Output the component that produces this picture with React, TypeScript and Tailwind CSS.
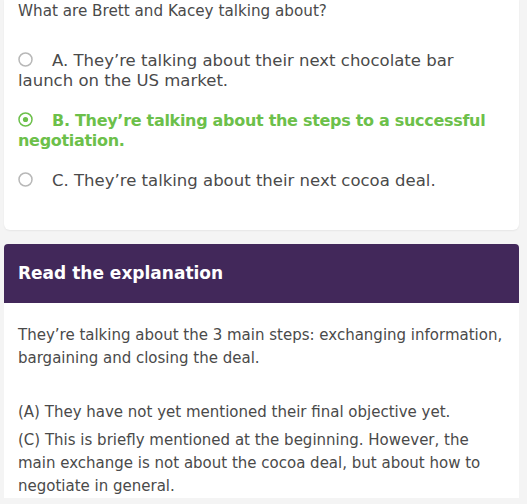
import React from 'react';

const options = [
  { id: 'A', text: 'They’re talking about their next chocolate bar launch on the US market.' },
  { id: 'B', text: 'They’re talking about the steps to a successful negotiation.' },
  { id: 'C', text: 'They’re talking about their next cocoa deal.' },
];

const Radio = ({ selected }: { selected: boolean }) => (
  <svg width="15" height="15" viewBox="0 0 15 15" className="inline-block align-[-1px] mr-[19px]">
    <circle cx="7.5" cy="7.5" r="6.5" fill="none" stroke={selected ? '#6cc04a' : '#b8b8b8'} strokeWidth="1.5" />
    {selected && <circle cx="7.5" cy="7.5" r="2.6" fill="#6cc04a" />}
  </svg>
);

const App = () => {
  return (
    <div className="w-[527px] h-[504px] overflow-hidden bg-[#f4f4f4] pl-[4px] pr-[8px] font-['DejaVu_Sans',sans-serif] text-[#4a4a4a]">
      <div className="bg-white rounded-b-[6px] shadow-[0_1px_2px_rgba(0,0,0,0.06)] px-[14px] pb-[39px]">
        <p className="text-[15.2px] leading-[20px] pt-[1px]">What are Brett and Kacey talking about?</p>
        <div className="mt-[30px] flex flex-col gap-[20px]">
          {options.map((o) => {
            const selected = o.id === 'B';
            return (
              <p
                key={o.id}
                className={`leading-[20px] ${
                  selected ? 'text-[#6cc04a] font-bold text-[16px] tracking-[-0.3px]' : 'text-[#4a4a4a] text-[16.5px]'
                }`}
              >
                <Radio selected={selected} />
                {o.id}. {o.text}
              </p>
            );
          })}
        </div>
      </div>

      <div className="mt-[14px] rounded-t-[4px] overflow-hidden bg-white">
        <div className="bg-[#42285a] h-[59px] flex items-center px-[14px]">
          <h2 className="text-white font-bold text-[17px]">Read the explanation</h2>
        </div>
        <div className="px-[14px] pt-[21px] text-[15px] leading-[23px]">
          <p>They’re talking about the 3 main steps: exchanging information, bargaining and closing the deal.</p>
          <p className="mt-[31px]">(A) They have not yet mentioned their final objective yet.</p>
          <p className="mt-[5px]">
            (C) This is briefly mentioned at the beginning. However, the main exchange is not about the cocoa deal, but about how to negotiate in general.
          </p>
        </div>
      </div>
    </div>
  );
};

export default App;
